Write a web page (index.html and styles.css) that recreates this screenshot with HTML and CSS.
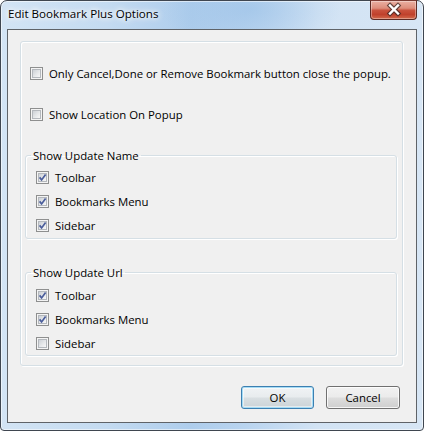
FILE: index.html
```html
<!DOCTYPE html>
<html>
<head>
<meta charset="utf-8">
<link rel="stylesheet" href="styles.css">
</head>
<body>
<div class="window">
  <div class="titlebar">
    <span class="title">Edit Bookmark Plus Options</span>
    <button class="close" aria-label="Close">
      <svg width="47" height="20" viewBox="0 0 47 20">
        <path d="M20 5.5 L28 13.5 M28 5.5 L20 13.5" stroke="#3b2723" stroke-width="4.6" stroke-linecap="square" fill="none" opacity="0.75"/>
        <path d="M20 5.5 L28 13.5 M28 5.5 L20 13.5" stroke="#ffffff" stroke-width="2.4" stroke-linecap="square" fill="none"/>
      </svg>
    </button>
  </div>
  <div class="client">
    <div class="panel">
      <label class="check opt first"><span class="box"></span><span class="text">Only Cancel,Done or Remove Bookmark button close the popup.</span></label>
      <label class="check opt second"><span class="box"></span><span class="text">Show Location On Popup</span></label>

      <fieldset class="group group-name">
        <legend>Show Update Name</legend>
        <label class="check"><span class="box checked"><svg viewBox="0 0 9 9"><path d="M1.6 4.4 L3.6 6.9 L7.6 1.4"/></svg></span><span class="text">Toolbar</span></label>
        <label class="check"><span class="box checked"><svg viewBox="0 0 9 9"><path d="M1.6 4.4 L3.6 6.9 L7.6 1.4"/></svg></span><span class="text">Bookmarks Menu</span></label>
        <label class="check"><span class="box checked"><svg viewBox="0 0 9 9"><path d="M1.6 4.4 L3.6 6.9 L7.6 1.4"/></svg></span><span class="text">Sidebar</span></label>
      </fieldset>

      <fieldset class="group group-url">
        <legend>Show Update Url</legend>
        <label class="check"><span class="box checked"><svg viewBox="0 0 9 9"><path d="M1.6 4.4 L3.6 6.9 L7.6 1.4"/></svg></span><span class="text">Toolbar</span></label>
        <label class="check"><span class="box checked"><svg viewBox="0 0 9 9"><path d="M1.6 4.4 L3.6 6.9 L7.6 1.4"/></svg></span><span class="text">Bookmarks Menu</span></label>
        <label class="check"><span class="box"></span><span class="text">Sidebar</span></label>
      </fieldset>
    </div>
    <div class="buttons">
      <button class="btn default">OK</button>
      <button class="btn cancel">Cancel</button>
    </div>
  </div>
</div>
</body>
</html>
```
FILE: styles.css
```css
* { box-sizing: border-box; }

html, body {
  margin: 0;
  padding: 0;
  background: #ffffff;
}

body {
  width: 424px;
  height: 431px;
  overflow: hidden;
  font-family: "Open Sans", "Noto Sans", sans-serif;
  font-size: 11.4px;
  color: #000;
}

.window {
  width: 424px;
  height: 431px;
  border: 1px solid #3f4650;
  border-radius: 7px 7px 4px 4px;
  display: flex;
  flex-direction: column;
  background:
    radial-gradient(ellipse 90px 40px at 250px 8px, rgba(150, 190, 230, 0.55), rgba(150, 190, 230, 0) 100%),
    linear-gradient(90deg, #d3e4f4 0%, #c4dbf1 25%, #aecdec 45%, #b9d4ef 58%, #d2e3f4 75%, #d7e6f5 100%);
  box-shadow: inset 0 0 0 1px rgba(255, 255, 255, 0.55);
}

.titlebar {
  height: 28px;
  flex: none;
  display: flex;
  align-items: flex-start;
}

.title {
  padding: 5px 0 0 7px;
  line-height: 15px;
  font-size: 11.6px;
  color: #000;
  text-shadow: 0 0 4px #fff, 0 0 7px #fff, 0 0 10px rgba(255,255,255,0.8);
}

.close {
  margin: -1px 6px 0 auto;
  width: 47px;
  height: 20px;
  padding: 0;
  border: 1px solid #5b2b25;
  border-top-color: #7a3a32;
  border-radius: 0 0 4px 4px;
  background: linear-gradient(180deg, #eab0a3 0%, #dd8d7b 40%, #c9523d 52%, #c0412c 75%, #d26a4c 100%);
  box-shadow: inset 0 0 0 1px rgba(255, 255, 255, 0.35);
  display: block;
}

.close svg { display: block; margin: -1px 0 0 -1px; }

.client {
  flex: 1;
  margin: 0 6px 7px 6px;
  border: 1px solid #5f6368;
  background: #f0f0f0;
  padding: 11px 0 13px 12px;
  display: flex;
  flex-direction: column;
}

.panel {
  flex: none;
  width: 383px;
  height: 325px;
  border: 1px solid #d5dfe5;
  border-radius: 3px;
  box-shadow: inset 1px 1px 0 #ffffff, 1px 1px 0 #ffffff;
  padding: 25px 0 0 0;
  display: flex;
  flex-direction: column;
}

.check {
  display: flex;
  align-items: center;
  height: 13px;
  line-height: 15px;
  white-space: nowrap;
}

.check .text { margin-left: 6px; }

.opt { margin-left: 9px; }
.opt.second { margin-top: 28px; }

.box {
  width: 13px;
  height: 13px;
  flex: none;
  border: 1px solid #8e8f8f;
  background: #f4f4f4;
  display: grid;
  place-items: center;
}

.box::before {
  content: "";
  grid-area: 1 / 1;
  width: 7px;
  height: 7px;
  border: 1px solid #b4b8bd;
  background: linear-gradient(135deg, #cdd1d6 0%, #e6e8ea 55%, #f7f7f7 100%);
}

.box svg {
  grid-area: 1 / 1;
  width: 9px;
  height: 9px;
  fill: none;
  stroke: #4a5d9b;
  stroke-width: 1.7;
}

.group {
  margin: 0 5px 0 4px;
  border: 1px solid #d5dfe5;
  border-radius: 3px;
  box-shadow: inset 1px 1px 0 #ffffff, 1px 1px 0 #ffffff;
  padding: 8px 0 6px 10px;
  display: flex;
  flex-direction: column;
  gap: 11px;
  min-inline-size: 0;
}

.group legend {
  margin-left: -5px;
  padding: 0 2px;
  line-height: 15px;
  height: 15px;
}

.group-name { margin-top: 27px; }
.group-url { margin-top: 26px; padding-top: 9px; padding-bottom: 5px; }

.buttons {
  margin-top: 20px;
  padding-right: 16px;
  display: flex;
  justify-content: flex-end;
  gap: 12px;
}

.btn {
  height: 23px;
  padding: 0;
  font: inherit;
  color: #000;
  border: 1px solid #707070;
  border-radius: 3px;
  background: linear-gradient(180deg, #f2f2f2 0%, #ebebeb 48%, #dddddd 52%, #cfcfcf 100%);
  box-shadow: inset 0 0 0 1px rgba(255, 255, 255, 0.8);
  line-height: 19px;
}

.btn.default {
  width: 73px;
  border-color: #3c7fb1;
  box-shadow: inset 0 0 0 1px #a6dcf5, inset 0 0 0 2px rgba(255,255,255,0.5);
  background: linear-gradient(180deg, #f0f3f5 0%, #e8ecee 48%, #d9dfe2 52%, #ccd3d7 100%);
}

.btn.cancel { width: 74px; }
```
